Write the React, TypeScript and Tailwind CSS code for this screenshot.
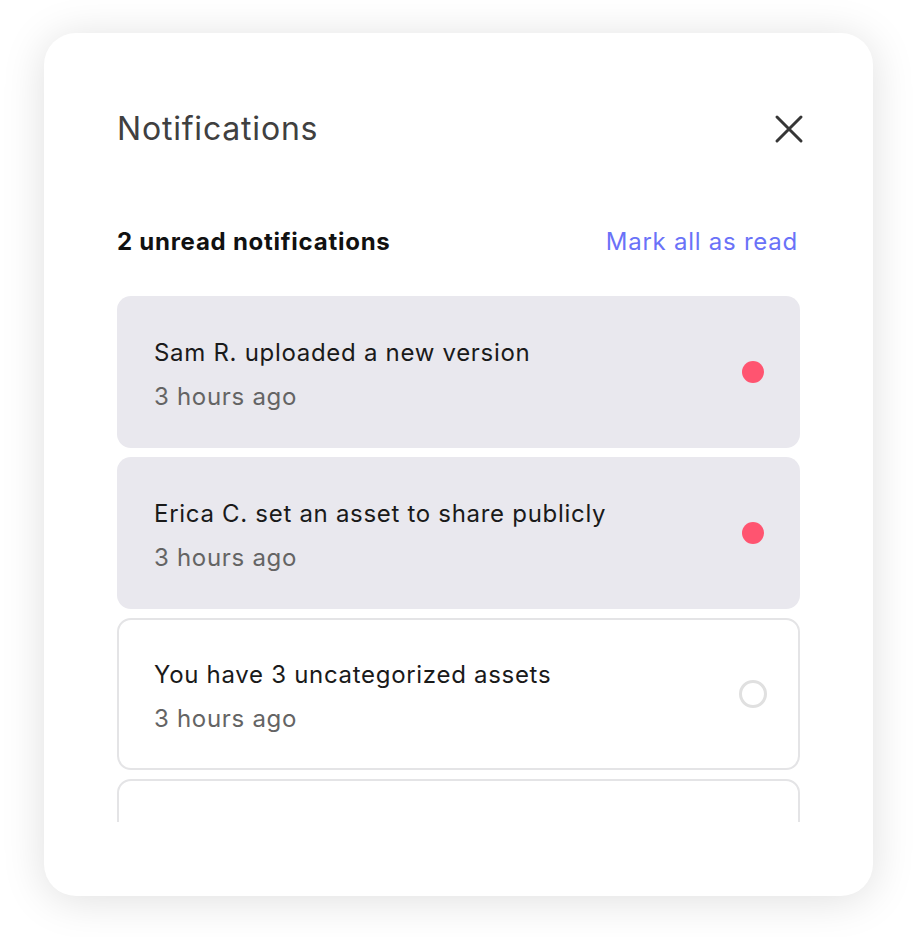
import React from "react";

type Item = { text: string; time: string; unread: boolean };

const items: Item[] = [
  { text: "Sam R. uploaded a new version", time: "3 hours ago", unread: true },
  { text: "Erica C. set an asset to share publicly", time: "3 hours ago", unread: true },
  { text: "You have 3 uncategorized assets", time: "3 hours ago", unread: false },
];

function CloseIcon() {
  return (
    <svg width="30" height="30" viewBox="0 0 30 30" fill="none">
      <path d="M3 3L27 27M27 3L3 27" stroke="#363636" strokeWidth="3" strokeLinecap="round" />
    </svg>
  );
}

export default function App() {
  return (
    <div
      className="min-h-[937px] w-[917px] bg-white pl-[44px] pt-[33px]"
      style={{ fontFamily: "Inter, 'Noto Sans', sans-serif" }}
    >
      <div className="flex h-[863px] w-[829px] flex-col rounded-[32px] bg-white px-[73px] pb-[74px] pt-[74px] shadow-[0_4px_44px_rgba(0,0,0,0.13)]">
        <div className="flex h-[44px] items-center justify-between">
          <h1 className="text-[32px] font-normal leading-[44px] tracking-[0.8px] text-[#404040]">Notifications</h1>
          <button className="mr-[-5px] flex h-[32px] w-[32px] items-center justify-center">
            <CloseIcon />
          </button>
        </div>
        <div className="mt-[76px] flex h-[30px] items-center justify-between">
          <span className="text-[24px] font-bold leading-[30px] tracking-[0.75px] text-[#111]">2 unread notifications</span>
          <span className="mr-[2px] text-[24px] leading-[30px] tracking-[0.75px] text-[#6a72f8]">Mark all as read</span>
        </div>
        <div className="mt-[39px] flex min-h-0 flex-1 flex-col gap-[9px] overflow-hidden">
          {items.map((it, i) => (
            <div
              key={i}
              className={
                it.unread
                  ? "flex h-[152px] shrink-0 items-center justify-between rounded-[14px] border-2 border-transparent bg-[#e9e8ee] pl-[35px] pr-[31px]"
                  : "flex h-[152px] shrink-0 items-center justify-between rounded-[14px] border-2 border-[#e4e4e6] bg-white pl-[35px] pr-[31px]"
              }
            >
              <div className="flex flex-col pt-[6px]">
                <span className="text-[24px] leading-[44px] tracking-[0.7px] text-[#1a1a1a]">{it.text}</span>
                <span className="text-[24px] leading-[44px] tracking-[0.7px] text-[#646464]">{it.time}</span>
              </div>
              <div className="flex h-[28px] w-[28px] items-center justify-center">
                {it.unread ? (
                  <div className="h-[22px] w-[22px] rounded-full bg-[#ff5470]" />
                ) : (
                  <div className="h-[28px] w-[28px] rounded-full border-[3px] border-[#e0e0e0]" />
                )}
              </div>
            </div>
          ))}
          <div className="h-[152px] shrink-0 rounded-[14px] border-2 border-[#e4e4e6] bg-white" />
        </div>
      </div>
    </div>
  );
}
